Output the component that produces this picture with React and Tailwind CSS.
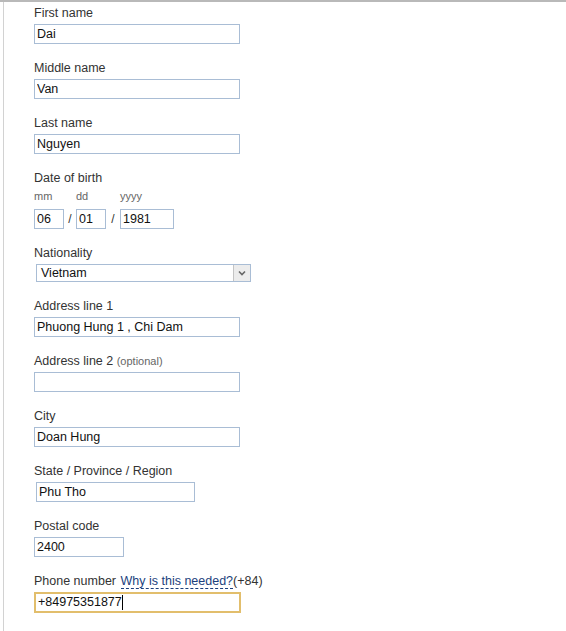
const font = { fontFamily: '"Liberation Sans", Arial, sans-serif' }

function Label({ children }) {
  return <div className="h-[15px] leading-[15px] text-[12.5px] text-[#333] mb-[3px] whitespace-nowrap">{children}</div>
}

function TextBox({ value, w = 'w-[206px]', className = '' }) {
  return (
    <input
      readOnly
      value={value}
      className={`block ${w} h-[20px] border border-[#a9bdd5] bg-white px-[2px] text-[12.5px] text-[#111] outline-none ${className}`}
      style={font}
    />
  )
}

function Field({ label, value, w, className }) {
  return (
    <div className="mb-[17px]">
      <Label>{label}</Label>
      <TextBox value={value} w={w} className={className} />
    </div>
  )
}

function DatePart({ label, value, w }) {
  return (
    <div className="flex flex-col">
      <span className="h-[15px] leading-[15px] text-[11px] text-[#666] mb-[5px]">{label}</span>
      <TextBox value={value} w={w} />
    </div>
  )
}

export default function App() {
  return (
    <div className="w-[566px] h-[631px] bg-white border-t-2 border-[#b9b9b9] overflow-hidden" style={font}>
      <div className="ml-[3px] h-full border-l border-[#d2d2d2] pl-[30px] pt-[4px]">
        <Field label="First name" value="Dai" />
        <Field label="Middle name" value="Van" />
        <Field label="Last name" value="Nguyen" />

        <div className="mb-[17px]">
          <Label>Date of birth</Label>
          <div className="flex items-end">
            <DatePart label="mm" value="06" w="w-[30px]" />
            <span className="w-[12px] h-[20px] leading-[20px] text-center text-[12px] text-[#333]">/</span>
            <DatePart label="dd" value="01" w="w-[30px]" />
            <span className="w-[14px] h-[20px] leading-[20px] text-center text-[12px] text-[#333]">/</span>
            <DatePart label="yyyy" value="1981" w="w-[54px]" />
          </div>
        </div>

        <div className="mb-[17px]">
          <Label>Nationality</Label>
          <div className="ml-[2px] w-[215px] h-[18px] flex border border-[#a9bdd5] bg-white">
            <span className="flex-1 pl-[4px] leading-[16px] text-[12.5px] text-[#111]">Vietnam</span>
            <span className="w-[17px] h-full flex items-center justify-center bg-[#ececec] border-l border-[#c4c4c4]">
              <svg width="8" height="6" viewBox="0 0 8 6">
                <path d="M1 1.5 L4 4.5 L7 1.5" fill="none" stroke="#666" strokeWidth="1.6" />
              </svg>
            </span>
          </div>
        </div>

        <Field label="Address line 1" value="Phuong Hung 1 , Chi Dam" />
        <Field
          label={<>Address line 2 <span className="text-[11px] text-[#666]">(optional)</span></>}
          value=""
        />
        <Field label="City" value="Doan Hung" />
        <Field label="State / Province / Region" value="Phu Tho" w="w-[159px]" className="ml-[2px]" />
        <Field label="Postal code" value="2400" w="w-[90px]" />

        <div>
          <Label>
            Phone number{' '}
            <span className="ml-[1px] text-[#1b3f7d] border-b border-dashed border-[#1b3f7d]">Why is this needed?</span>
            (+84)
          </Label>
          <div className="w-[207px] h-[21px] flex items-center border-2 border-[#e2be6c] bg-white pl-[2px] text-[12.5px] text-[#111]">
            +84975351877
            <span className="w-px h-[15px] bg-black" />
          </div>
        </div>
      </div>
    </div>
  )
}
